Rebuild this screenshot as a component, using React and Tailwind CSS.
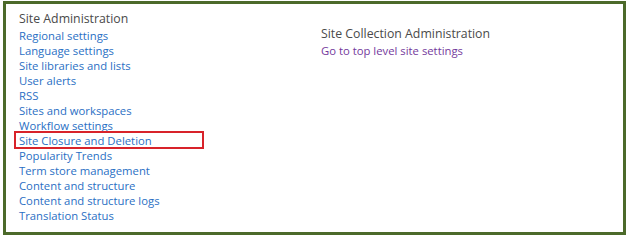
const LINKS = [
  'Regional settings',
  'Language settings',
  'Site libraries and lists',
  'User alerts',
  'RSS',
  'Sites and workspaces',
  'Workflow settings',
  'Site Closure and Deletion',
  'Popularity Trends',
  'Term store management',
  'Content and structure',
  'Content and structure logs',
  'Translation Status',
];

export default function App() {
  return (
    <div className="w-[628px] h-[238px] bg-white pt-[1px] pl-[3px]" style={{ fontFamily: '"Open Sans", "Noto Sans", sans-serif' }}>
      <div className="w-[623px] h-[234px] border-[3px] border-[#4c6a2a] flex pl-[13px] pt-[5px]">
        {/* left column */}
        <div className="w-[302px] flex flex-col">
          <h2 className="text-[12.3px] leading-[19px] text-[#4a4a4a]">Site Administration</h2>
          <ul className="flex flex-col">
            {LINKS.map((l) => (
              <li key={l} className="relative h-[15px] text-[11.3px] leading-[15px] text-[#2a6fc4]">
                {l}
                {l === 'Site Closure and Deletion' && (
                  <span className="absolute left-[-5px] top-[-2px] w-[190px] h-[18px] border-2 border-[#d8232a]" />
                )}
              </li>
            ))}
          </ul>
        </div>
        {/* right column */}
        <div className="flex flex-col pt-[16px]">
          <h2 className="text-[12.3px] leading-[18px] text-[#4a4a4a]">Site Collection Administration</h2>
          <span className="text-[11.3px] leading-[15px] text-[#74399c]">Go to top level site settings</span>
        </div>
      </div>
    </div>
  );
}
